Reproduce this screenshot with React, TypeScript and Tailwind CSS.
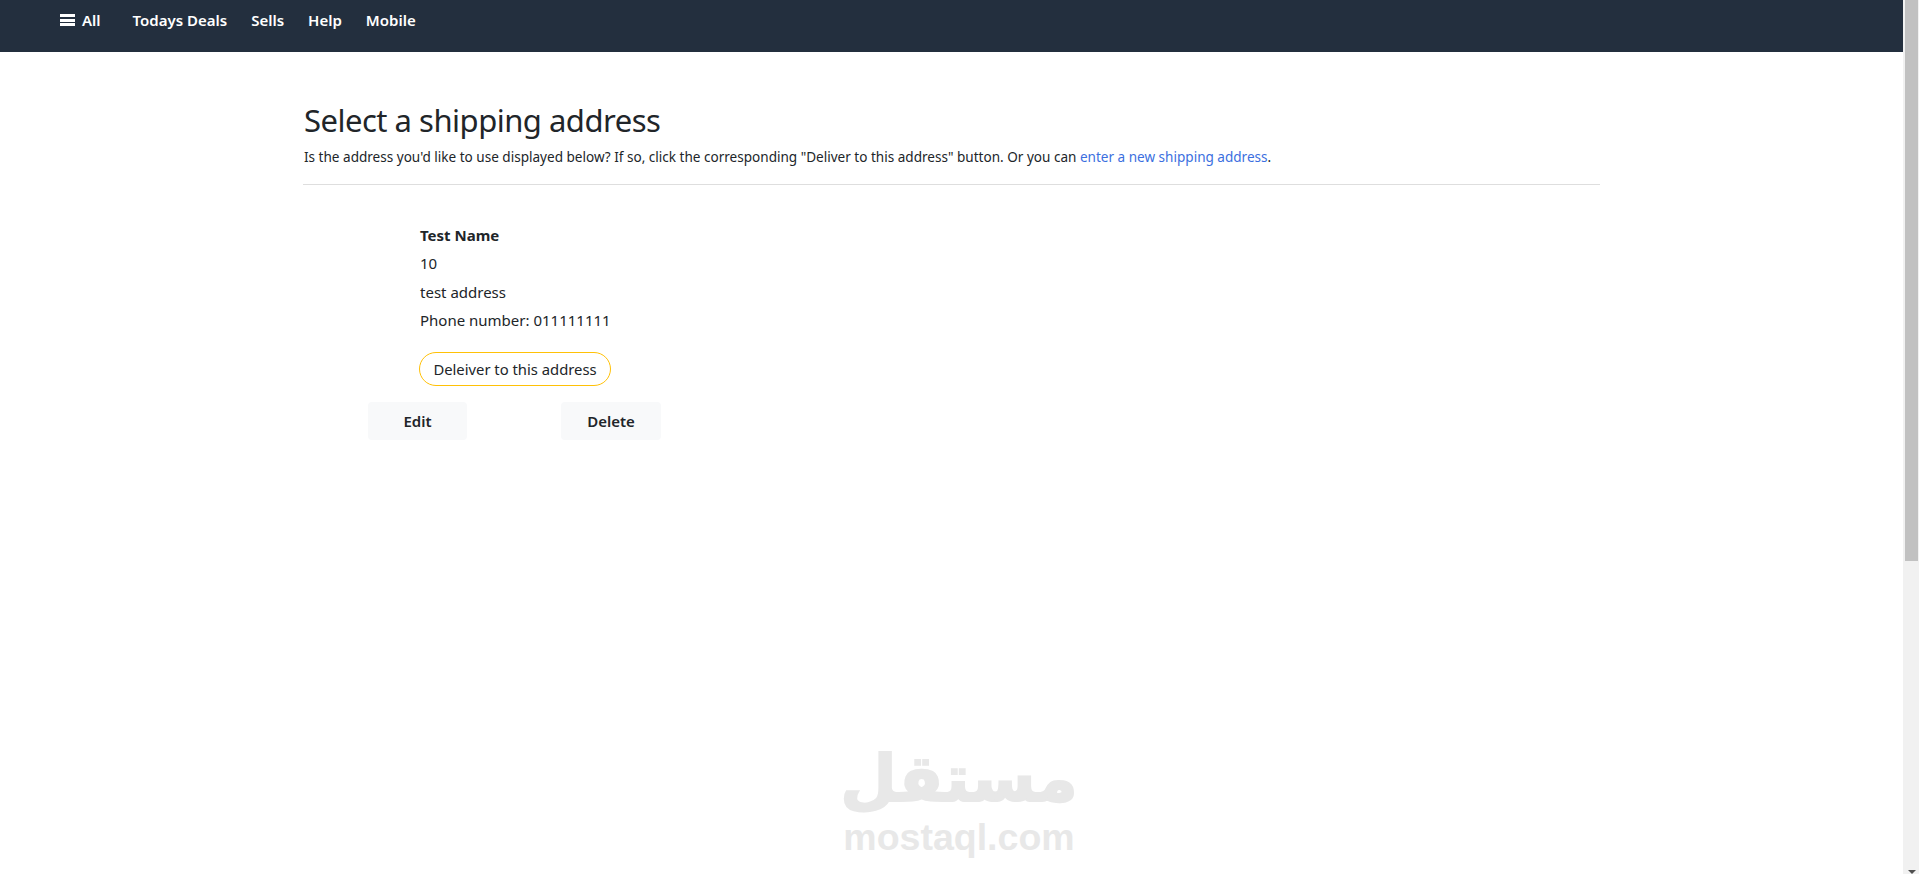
const navLinks = ['Todays Deals', 'Sells', 'Help', 'Mobile'];

function Navbar() {
  return (
    <nav className="h-[52px] bg-[#232f3e] text-white text-[15px] font-semibold pl-[60px] flex items-start pt-[9px]">
      <a className="flex items-center gap-[7px] mr-[32px]">
        <span className="w-[15px] h-[12px] flex flex-col justify-between">
          <span className="h-[3px] bg-white" />
          <span className="h-[3px] bg-white" />
          <span className="h-[3px] bg-white" />
        </span>
        All
      </a>
      <div className="flex gap-[24px]">
        {navLinks.map((l) => (
          <a key={l}>{l}</a>
        ))}
      </div>
    </nav>
  );
}

function AddressCard() {
  return (
    <div className="w-[293px] ml-[65px] mt-[36px]">
      <div className="pl-[52px] text-[15px] leading-[28.3px] text-[#212529]">
        <div className="font-bold">Test Name</div>
        <div>10</div>
        <div>test address</div>
        <div>Phone number: 011111111</div>
        <button className="mt-[18px] h-[34px] w-[192px] -ml-px rounded-full border border-[#ffc107] text-[14.8px] text-[#212529] flex items-center justify-center">
          Deleiver to this address
        </button>
      </div>
      <div className="flex justify-between mt-[16px]">
        <button className="h-[38px] w-[99px] rounded bg-[#f8f9fa] text-[15px] font-semibold text-[#212529]">Edit</button>
        <button className="h-[38px] w-[100px] rounded bg-[#f8f9fa] text-[15px] font-semibold text-[#212529]">Delete</button>
      </div>
    </div>
  );
}

function Scrollbar() {
  return (
    <div className="w-4 bg-[#f1f1f1] relative shrink-0">
      <div className="ml-[2px] w-[13px] h-[561px] bg-[#c1c1c1]" />
      <div className="absolute bottom-0 left-[5px] w-0 h-0 border-x-[4px] border-x-transparent border-t-[4px] border-t-[#505050]" />
    </div>
  );
}

export default function App() {
  return (
    <div className="h-screen flex overflow-hidden bg-white font-['Noto_Sans','Open_Sans',sans-serif]">
      <div className="flex-1 relative">
        <Navbar />
        <main className="w-[1297px] mx-auto pt-[47px]">
          <h1 className="text-[31px] tracking-[-0.5px] leading-[42px] text-[#212529] ml-px">Select a shipping address</h1>
          <p className="text-[13.55px] leading-[20px] mt-[6px] ml-px text-[#212529]">
            Is the address you'd like to use displayed below? If so, click the corresponding "Deliver to this address" button. Or you can{' '}
            <a className="text-[#3b6fe0]">enter a new shipping address</a>.
          </p>
          <hr className="mt-[17px] border-[#dedede]" />
          <AddressCard />
        </main>
        {/* watermark */}
        <div className="absolute left-[843px] bottom-[15px] w-[232px] flex flex-col items-center text-[#e8e8e8] select-none">
          <div dir="rtl" className="font-['DejaVu_Sans',sans-serif] font-bold text-[65px] leading-[72px] [-webkit-text-stroke:2px_#e8e8e8]">مستقل</div>
          <div className="font-['Liberation_Sans',sans-serif] font-bold text-[37.5px] leading-[44px]">mostaql.com</div>
        </div>
      </div>
      <Scrollbar />
    </div>
  );
}
